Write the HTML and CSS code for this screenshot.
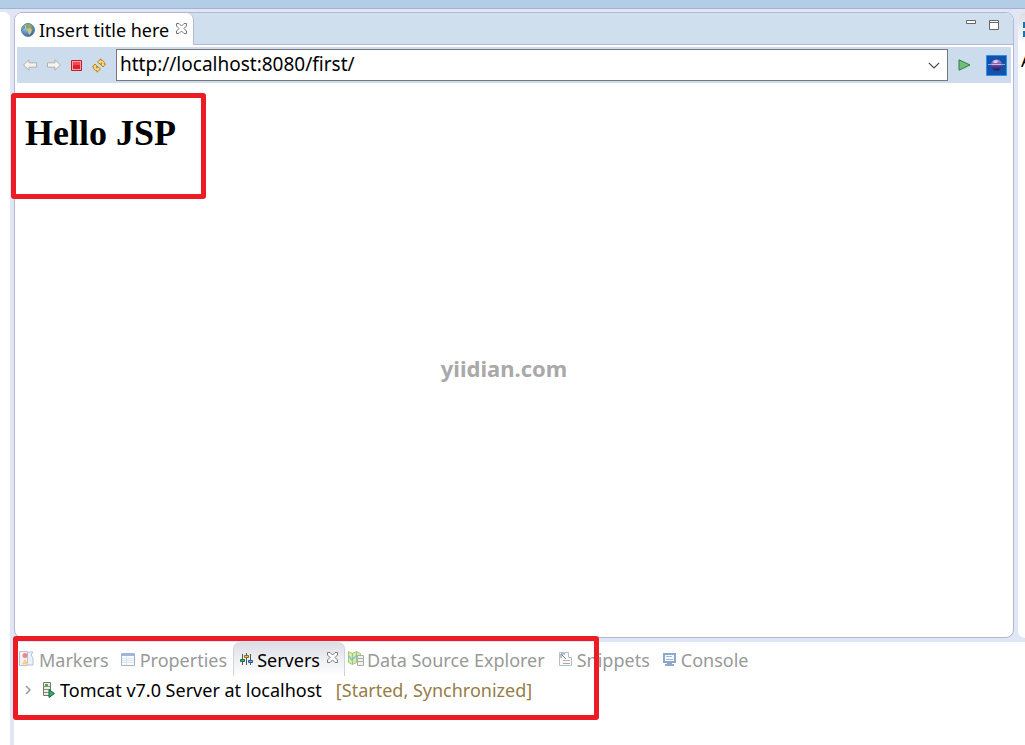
FILE: index.html
```
<!DOCTYPE html>
<html lang="en">
<head>
  <meta charset="UTF-8">
  <meta name="viewport" content="width=device-width, initial-scale=1">
  <title>Insert title here</title>
  <link rel="stylesheet" href="styles.css">
</head>
<body>

  <!-- shared icon parts -->
  <svg class="defs" width="0" height="0" aria-hidden="true">
    <symbol id="close" viewBox="0 0 11 11">
      <path d="M.5.5h2.500l2.500 2.500 2.500-2.500h2.500v2.500L8 5.500l2.500 2.500v2.500H8L5.500 8 3 10.500H.5V8L3 5.500.5 3z" fill="#fff" stroke="#777"/>
    </symbol>
    <radialGradient id="globe" cx=".35" cy=".3" r=".8">
      <stop offset="0" stop-color="#a9d4ee"/>
      <stop offset="1" stop-color="#20599b"/>
    </radialGradient>
    <radialGradient id="sky">
      <stop offset="0" stop-color="#23479f"/>
      <stop offset="1" stop-color="#0f55b0"/>
    </radialGradient>
    <linearGradient id="orb" x2="0" y2="1">
      <stop offset="0" stop-color="#b9a0d8"/>
      <stop offset=".6" stop-color="#5b3f94"/>
      <stop offset="1" stop-color="#1d1959"/>
    </linearGradient>
  </svg>

  <div class="toolbar-edge"></div>

  <div class="workbench">
    <aside class="side-left"></aside>

    <div class="center">
      <div class="top-row">
        <!-- EDITOR -->
        <section class="editor">
          <div class="editor-tabs">
            <div class="editor-tab">
              <svg width="14" height="14" viewBox="0 0 14 14">
                <circle cx="7" cy="7" r="6.500" fill="url(#globe)" stroke="#6d8298"/>
                <path d="M5 2l3-1 3 2-1 2-2 0-1 2-2-2z" fill="#8faa5c"/>
                <path d="M6 6l3-1 2 2-1 3-2 2-1-3z" fill="#d9c27a"/>
                <path d="M2 4l2-1 0 2-2 1zM11 4l2 2-1 2z" fill="#6c9a5a"/>
              </svg>
              <span>Insert title here</span>
              <button class="close" aria-label="Close tab"><svg width="11" height="11"><use href="#close"/></svg></button>
            </div>
            <div class="window-buttons">
              <button aria-label="Minimize"><svg width="10" height="4" viewBox="0 0 10 4"><path d="M.5.5h9v3h-9z" fill="#fff" stroke="#666"/></svg></button>
              <button aria-label="Maximize"><svg width="10" height="10" viewBox="0 0 10 10"><path d="M.5.5h9v9h-9zM.5 2.500h9" fill="#fff" stroke="#666"/></svg></button>
            </div>
          </div>

          <div class="browser-bar">
            <button aria-label="Back"><svg width="14" height="12" viewBox="0 0 14 12"><path d="M.5 6L6 .8v3h7.500v4.400H6v3z" fill="#f4f4ef" stroke="#b0b1ae"/></svg></button>
            <button aria-label="Forward"><svg width="14" height="12" viewBox="0 0 14 12"><path d="M13.500 6L8 .8v3H.5v4.400H8v3z" fill="#f4f4ef" stroke="#b0b1ae"/></svg></button>
            <button aria-label="Stop"><svg width="11" height="11" viewBox="0 0 11 11"><path d="M.5.5h10v10H.5z" fill="#f9a5a8" stroke="#c01c28"/><path d="M2 2h7v7H2z" fill="#e01f2d"/><path d="M2 2h7v3H2z" fill="#ea4d55"/></svg></button>
            <button aria-label="Refresh"><svg width="14" height="15" viewBox="0 0 14 15" fill="#fae08a" stroke="#b8801a" stroke-linejoin="round"><path d="M5.500 4L9 .8v1.700c2.500 0 3.500 1 3.300 3.500h1.200L11 9 8.500 6h1.200c0-1-.2-1.200-.7-1.200v2z"/><path d="M8.500 11L5 14.200v-1.700C2.500 12.500 1.500 11.500 1.700 9H.5L3 6l2.500 3H4.300c0 1 .2 1.200.7 1.200v-2z"/></svg></button>
            <div class="address">
              <input type="text" aria-label="Address" value="http://localhost:8080/first/">
              <button aria-label="Show history"><svg width="12" height="7" viewBox="0 0 12 7"><path d="M.8.8L6 6 11.200.8" fill="none" stroke="#444" stroke-width="1.200"/></svg></button>
            </div>
            <button class="go" aria-label="Go"><svg width="13" height="12" viewBox="0 0 13 12"><path d="M1 .8L12 6 1 11.200z" fill="#71bd7a" stroke="#2a8245"/></svg></button>
            <svg width="21" height="21" viewBox="0 0 21 21">
              <path d="M.5.5h20v20H.5z" fill="url(#sky)" stroke="#2f8ee8"/>
              <circle cx="10.500" cy="10" r="5.500" fill="url(#orb)"/>
              <path d="M7 7c1-2 4-2 5-1l-1 2H8z" fill="#d9cdf0"/>
              <path d="M2 9.500h17" stroke="#8fa6e6"/>
              <path d="M6 9.500h9" stroke="#c6b9ec"/>
            </svg>
          </div>

          <div class="page">
            <h1>Hello JSP</h1>
            <p class="watermark">yiidian.com</p>
          </div>
          <div class="mark mark-page"></div>
        </section>

        <!-- OUTLINE (cut off by the window) -->
        <aside class="side-right">
          <div class="side-tab"><svg width="8" height="16" viewBox="0 0 8 16"><path d="M0 0h8v6H0zM0 9h8v6H0z" fill="#1674b8"/></svg></div>
          <p>A</p>
        </aside>
      </div>

      <!-- BOTTOM VIEWS -->
      <section class="views">
        <div class="view-tabs">
          <button class="view-tab markers">
            <svg width="15" height="16" viewBox="0 0 15 16"><path d="M.5.5h8v14h-8z" fill="#f2f4fa" stroke="#b4c2da"/><path d="M9 1h5l-2 3 2 3v7H9" fill="#edf2fa" stroke="#b4c2da"/><circle cx="6" cy="4.500" r="2.500" fill="#f18484"/><path d="M6 8l3.500 5.500h-7z" fill="#f7d184"/></svg>
            Markers
          </button>
          <button class="view-tab properties">
            <svg width="14" height="13" viewBox="0 0 14 13"><path d="M.5.5h13v12H.5z" fill="#f8fbff" stroke="#a5b4cc"/><path d="M1 1h12v2H1z" fill="#9bb8dd"/><path d="M1 5.500h12M1 7.500h12M1 9.500h12M5.500 3v9" stroke="#dde5ef"/></svg>
            Properties
          </button>
          <div class="view-tab active">
            <svg width="13" height="13" viewBox="0 0 13 13">
              <path d="M2.500 1v11M6.500 0v12M10.500 1v11" stroke="#4b5a68"/>
              <path d="M.5 6.500h4v2h-4z" fill="#57a56c" stroke="#1e6f42"/>
              <path d="M4.500 2.500h4v2h-4z" fill="#f0c64a" stroke="#94690f"/>
              <path d="M8.500 7.500h4v2h-4z" fill="#86aede" stroke="#2c568f"/>
            </svg>
            <span>Servers</span>
            <button class="close" aria-label="Close view"><svg width="11" height="11"><use href="#close"/></svg></button>
          </div>
          <button class="view-tab source">
            <svg width="16" height="16" viewBox="0 0 16 16"><path d="M.5.5l4 2 4-2 4 2v11l-4-2-4 2-4-2z" fill="#d9ee9f" stroke="#a3c78a"/><path d="M4.500 2.500v11M8.500.5v11" stroke="#9fc089"/><path d="M1 5l3 4 4-4 2 3" fill="none" stroke="#86c3cf" stroke-width="1.500"/><path d="M9.500 4.500h6v10h-6z" fill="#f2f2ec" stroke="#a9aea4"/><path d="M10 7.500h5M10 10.500h5" stroke="#a9aea4"/></svg>
            Data Source Explorer
          </button>
          <button class="view-tab snippets">
            <svg width="13" height="14" viewBox="0 0 13 14"><path d="M.5 13.500V.5h9v5h3v8z" fill="#fafbfd" stroke="#b5bfcc"/><path d="M2 6V2h4M2.500 2.500L7 7" fill="none" stroke="#75849c"/><path d="M4 8.500h7" stroke="#e79b9b"/><path d="M4 11.500h7" stroke="#91b991"/></svg>
            Snippets
          </button>
          <button class="view-tab console">
            <svg width="13" height="13" viewBox="0 0 13 13"><path d="M1 1h11v8H1z" fill="#f8fbff" stroke="#8ba9d0" stroke-width="2"/><path d="M3 3.500h6M3 6.500h7" stroke="#a7b6d2"/><path d="M4 10h5v1h2v2H2v-2h2z" fill="#91a9c9"/></svg>
            Console
          </button>
        </div>

        <div class="server-row">
          <button aria-label="Expand server"><svg width="6" height="10" viewBox="0 0 6 10"><path d="M1 1l4 4-4 4" fill="none" stroke="#999" stroke-width="1.500"/></svg></button>
          <svg width="12" height="16" viewBox="0 0 12 16"><path d="M.5.5h7v13h-7z" fill="#e9eee4" stroke="#75796f"/><path d="M1 4.500h6M1 7.500h6M1 10.500h6" stroke="#8b9185"/><path d="M2 2h3v2H2z" fill="#50ac42"/><path d="M6 7.500l5.500 4L6 15.500z" fill="#39a86b" stroke="#196d3b"/></svg>
          <span class="server-name">Tomcat v7.0 Server at localhost</span>
          <span class="server-state">[Started, Synchronized]</span>
        </div>
        <div class="mark mark-servers"></div>
      </section>
    </div>
  </div>

</body>
</html>
```
FILE: styles.css
```
* {
  box-sizing: border-box;
}

body {
  margin: 0;
  height: 100vh;
  display: flex;
  flex-direction: column;
  overflow: hidden;
  background: #e1e6f6;
  font-family: "Noto Sans", "Open Sans", sans-serif;
  font-size: 18px;
  line-height: 24px;
  color: #000;
}

button {
  display: flex;
  align-items: center;
  padding: 0;
  border: 0;
  background: none;
  font: inherit;
  color: inherit;
}

svg {
  display: block;
  flex: none;
}

.defs {
  position: absolute;
}

.toolbar-edge {
  flex: none;
  height: 9px;
  background: #b3cde6;
  border-bottom: 1px solid #a9afd0;
}

.workbench {
  flex: 1;
  min-height: 0;
  display: flex;
  gap: 4px;
  padding-top: 3px;
}

.side-left {
  flex: none;
  width: 10px;
  background: #fff;
  border-top-right-radius: 6px;
}

.center {
  flex: 1;
  min-width: 0;
  display: flex;
  flex-direction: column;
  gap: 4px;
}

.top-row {
  flex: 1;
  min-height: 0;
  display: flex;
  gap: 4px;
}

/* EDITOR */
.editor {
  position: relative;
  flex: 1;
  min-width: 0;
  display: flex;
  flex-direction: column;
  background: #fff;
  border: 1px solid #b2b8cf;
  border-radius: 8px;
}

.editor-tabs {
  display: flex;
  justify-content: space-between;
  height: 32px;
  background: #cfdfee;
  border-bottom: 1px solid #b2b8cf;
  border-radius: 7px 7px 0 0;
}

.editor-tab {
  display: flex;
  align-items: center;
  gap: 4px;
  height: 32px;
  padding: 2px 6px 0;
  background: #fff;
  border-right: 1px solid #b2b8cf;
  border-radius: 7px 7px 0 0;
}

.close {
  margin-left: 3px;
  padding-bottom: 3px;
}

.window-buttons {
  display: flex;
  align-items: flex-start;
  gap: 13px;
  padding: 7px 14px 0 0;
}

.browser-bar {
  display: flex;
  align-items: center;
  gap: 10px;
  height: 36px;
  margin: 2px 2px 0;
  padding: 0 4px 0 6px;
  background: #cddcec;
}

.address {
  flex: 1;
  display: flex;
  height: 32px;
  background: #fff;
  border: 1px solid #777;
}

.address input {
  flex: 1;
  min-width: 0;
  padding: 0 3px 2px;
  border: 0;
  outline: 0;
  background: none;
  font: inherit;
  font-size: 19px;
}

.address button {
  padding: 0 7px;
}

.go {
  margin-right: 5px;
}

.page {
  flex: 1;
  display: flex;
  flex-direction: column;
  padding: 30px 10px;
}

.page h1 {
  margin: 0;
  font: bold 36px/40px "Liberation Serif", "Times New Roman", serif;
}

.watermark {
  margin: 203px 0 0;
  padding-right: 20px;
  text-align: center;
  font: bold 22px/24px "Comic Sans MS", "Noto Sans", sans-serif;
  color: #a9a9a9;
}

/* OUTLINE */
.side-right {
  flex: none;
  width: 7px;
  overflow: hidden;
  background: #fff;
  border-radius: 8px 0 0 8px;
}

.side-tab {
  height: 32px;
  padding: 10px 0 0 5px;
  background: linear-gradient(#dcdde4, #fff);
}

.side-right p {
  margin: 4px 0 0 3px;
}

/* BOTTOM VIEWS */
.views {
  position: relative;
  flex: none;
  height: 103px;
  background: #fff;
}

.view-tabs {
  display: flex;
  height: 34px;
  padding-left: 5px;
  color: #999;
  white-space: nowrap;
}

.view-tab {
  display: flex;
  align-items: center;
  gap: 5px;
  padding: 2px 6px 0;
}

.view-tab svg {
  margin-bottom: 2px;
}

.view-tab.markers {
  padding-left: 0;
}

.view-tab.active {
  gap: 4px;
  background: linear-gradient(#dcdee5, #fff);
  border: solid #d0d2de;
  border-width: 0 1px;
  border-radius: 7px 7px 0 0;
  color: #000;
}

.view-tab.source {
  gap: 3px;
  padding-left: 3px;
}

.view-tab.snippets,
.view-tab.console {
  padding-left: 8px;
}

.view-tab.snippets {
  padding-right: 5px;
}

.server-row {
  display: flex;
  align-items: center;
  height: 28px;
  padding-left: 11px;
  white-space: nowrap;
}

.server-row button {
  margin-right: 12px;
}

.server-name {
  margin-left: 5px;
}

.server-state {
  margin-left: 14px;
  color: #957d47;
}

/* Red highlight frames, over the content */
.mark {
  position: absolute;
  border: 5px solid #ed1c24;
  border-radius: 3px;
  pointer-events: none;
}

.mark-page {
  top: 80px;
  left: -4px;
  width: 195px;
  height: 106px;
}

.mark-servers {
  top: -6px;
  left: -1px;
  width: 586px;
  height: 84px;
}
```
